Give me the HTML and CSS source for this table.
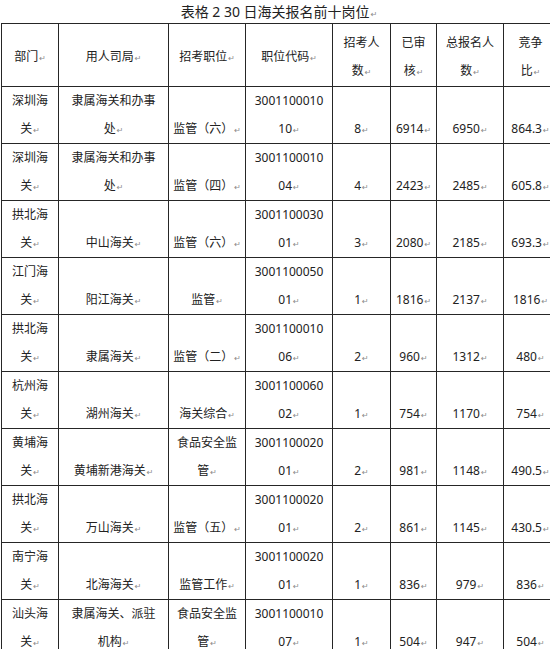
FILE: index.html
```html
<!DOCTYPE html>
<html lang="zh">
<head>
<meta charset="utf-8">
<title>表格 2 30日海关报名前十岗位</title>
<link rel="stylesheet" href="styles.css">
</head>
<body>
<div class="caption">表格 2 30 日海关报名前十岗位<span class="pm">↵</span></div>
<table class="grid">
  <colgroup>
    <col class="c1"><col class="c2"><col class="c3"><col class="c4"><col class="c5"><col class="c6"><col class="c7"><col class="c8">
  </colgroup>
  <thead>
    <tr class="hd">
      <th>部门<span class="pm">↵</span></th>
      <th>用人司局<span class="pm">↵</span></th>
      <th>招考职位<span class="pm">↵</span></th>
      <th>职位代码<span class="pm">↵</span></th>
      <th>招考人<br>数<span class="pm">↵</span></th>
      <th>已审<br>核<span class="pm">↵</span></th>
      <th>总报名人<br>数<span class="pm">↵</span></th>
      <th>竞争<br>比<span class="pm">↵</span></th>
    </tr>
  </thead>
  <tbody>
    <tr>
      <td>深圳海<br>关<span class="pm">↵</span></td>
      <td>隶属海关和办事<br>处<span class="pm">↵</span></td>
      <td>监管（六）<span class="pm">↵</span></td>
      <td>3001100010<br>10<span class="pm">↵</span></td>
      <td>8<span class="pm">↵</span></td>
      <td>6914<span class="pm">↵</span></td>
      <td>6950<span class="pm">↵</span></td>
      <td>864.3<span class="pm">↵</span></td>
    </tr>
    <tr>
      <td>深圳海<br>关<span class="pm">↵</span></td>
      <td>隶属海关和办事<br>处<span class="pm">↵</span></td>
      <td>监管（四）<span class="pm">↵</span></td>
      <td>3001100010<br>04<span class="pm">↵</span></td>
      <td>4<span class="pm">↵</span></td>
      <td>2423<span class="pm">↵</span></td>
      <td>2485<span class="pm">↵</span></td>
      <td>605.8<span class="pm">↵</span></td>
    </tr>
    <tr>
      <td>拱北海<br>关<span class="pm">↵</span></td>
      <td>中山海关<span class="pm">↵</span></td>
      <td>监管（六）<span class="pm">↵</span></td>
      <td>3001100030<br>01<span class="pm">↵</span></td>
      <td>3<span class="pm">↵</span></td>
      <td>2080<span class="pm">↵</span></td>
      <td>2185<span class="pm">↵</span></td>
      <td>693.3<span class="pm">↵</span></td>
    </tr>
    <tr>
      <td>江门海<br>关<span class="pm">↵</span></td>
      <td>阳江海关<span class="pm">↵</span></td>
      <td>监管<span class="pm">↵</span></td>
      <td>3001100050<br>01<span class="pm">↵</span></td>
      <td>1<span class="pm">↵</span></td>
      <td>1816<span class="pm">↵</span></td>
      <td>2137<span class="pm">↵</span></td>
      <td>1816<span class="pm">↵</span></td>
    </tr>
    <tr>
      <td>拱北海<br>关<span class="pm">↵</span></td>
      <td>隶属海关<span class="pm">↵</span></td>
      <td>监管（二）<span class="pm">↵</span></td>
      <td>3001100010<br>06<span class="pm">↵</span></td>
      <td>2<span class="pm">↵</span></td>
      <td>960<span class="pm">↵</span></td>
      <td>1312<span class="pm">↵</span></td>
      <td>480<span class="pm">↵</span></td>
    </tr>
    <tr>
      <td>杭州海<br>关<span class="pm">↵</span></td>
      <td>湖州海关<span class="pm">↵</span></td>
      <td>海关综合<span class="pm">↵</span></td>
      <td>3001100060<br>02<span class="pm">↵</span></td>
      <td>1<span class="pm">↵</span></td>
      <td>754<span class="pm">↵</span></td>
      <td>1170<span class="pm">↵</span></td>
      <td>754<span class="pm">↵</span></td>
    </tr>
    <tr>
      <td>黄埔海<br>关<span class="pm">↵</span></td>
      <td>黄埔新港海关<span class="pm">↵</span></td>
      <td>食品安全监<br>管<span class="pm">↵</span></td>
      <td>3001100020<br>01<span class="pm">↵</span></td>
      <td>2<span class="pm">↵</span></td>
      <td>981<span class="pm">↵</span></td>
      <td>1148<span class="pm">↵</span></td>
      <td>490.5<span class="pm">↵</span></td>
    </tr>
    <tr>
      <td>拱北海<br>关<span class="pm">↵</span></td>
      <td>万山海关<span class="pm">↵</span></td>
      <td>监管（五）<span class="pm">↵</span></td>
      <td>3001100020<br>01<span class="pm">↵</span></td>
      <td>2<span class="pm">↵</span></td>
      <td>861<span class="pm">↵</span></td>
      <td>1145<span class="pm">↵</span></td>
      <td>430.5<span class="pm">↵</span></td>
    </tr>
    <tr>
      <td>南宁海<br>关<span class="pm">↵</span></td>
      <td>北海海关<span class="pm">↵</span></td>
      <td>监管工作<span class="pm">↵</span></td>
      <td>3001100020<br>01<span class="pm">↵</span></td>
      <td>1<span class="pm">↵</span></td>
      <td>836<span class="pm">↵</span></td>
      <td>979<span class="pm">↵</span></td>
      <td>836<span class="pm">↵</span></td>
    </tr>
    <tr>
      <td>汕头海<br>关<span class="pm">↵</span></td>
      <td>隶属海关、派驻<br>机构<span class="pm">↵</span></td>
      <td>食品安全监<br>管<span class="pm">↵</span></td>
      <td>3001100010<br>07<span class="pm">↵</span></td>
      <td>1<span class="pm">↵</span></td>
      <td>504<span class="pm">↵</span></td>
      <td>947<span class="pm">↵</span></td>
      <td>504<span class="pm">↵</span></td>
    </tr>
  </tbody>
</table>
</body>
</html>
```

FILE: styles.css
```css
html, body {
  margin: 0;
  padding: 0;
  overflow: hidden;
  background: #ffffff;
}
body {
  width: 550px;
  height: 649px;
  font-family: "Noto Sans", "Noto Sans CJK SC", sans-serif;
  font-size: 12px;
  color: #222222;
}
.caption {
  height: 23px;
  line-height: 24px;
  font-size: 14px;
  text-align: center;
  padding-left: 8px;
  white-space: nowrap;
}
.pm {
  font-family: "DejaVu Sans", sans-serif;
  font-size: 8px;
  line-height: 1;
  color: #8a8a8a;
  margin-left: 1px;
}
.grid {
  border-collapse: collapse;
  table-layout: fixed;
  width: 556px;
  margin-left: 1px;
}
.c1 { width: 57px; }
.c2 { width: 110px; }
.c3 { width: 77px; }
.c4 { width: 87px; }
.c5 { width: 58px; }
.c6 { width: 46px; }
.c7 { width: 67px; }
.c8 { width: 54px; }
.grid th,
.grid td {
  border: 1px solid #262626;
  padding: 0;
  text-align: center;
  line-height: 28px;
  white-space: nowrap;
  font-weight: normal;
}
.grid th {
  vertical-align: middle;
  padding-top: 4px;
}
.grid td {
  vertical-align: bottom;
}
.hd {
  height: 63px;
}
.grid tbody tr {
  height: 56.5px;
}
```
